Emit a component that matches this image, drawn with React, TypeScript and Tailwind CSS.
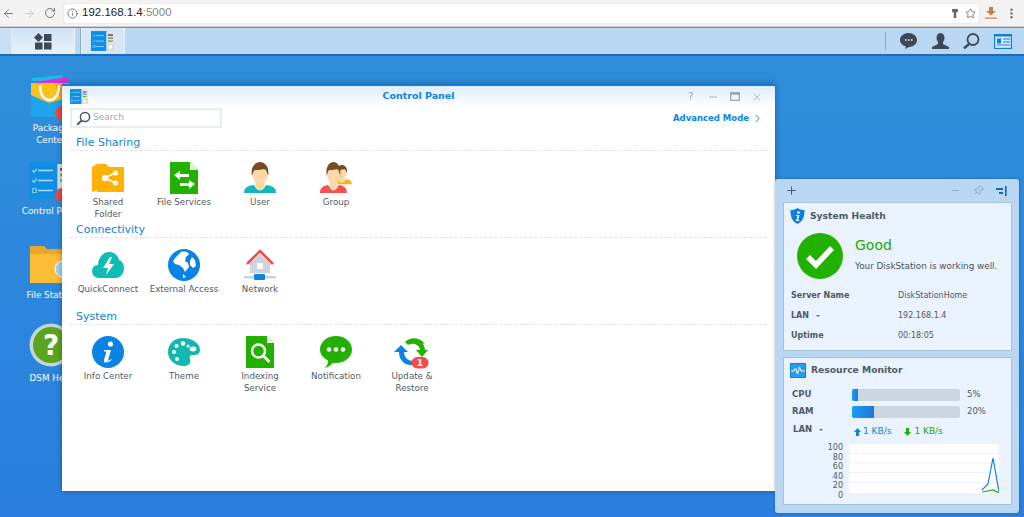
import React from 'react';
import { ArrowLeft, ArrowRight, RotateCw, Info, Star, MoreVertical, Plus, Minus, Pin, X, ChevronRight } from 'lucide-react';

const font = "font-['DejaVu_Sans',sans-serif]";

function ControlPanelIcon({ size = 24, className = '' }: { size?: number; className?: string }) {
  return (
    <svg width={size} height={size * 0.84} viewBox="0 0 24 20" className={className}>
      <rect x="0" y="0" width="15.5" height="20" fill="#0f8fe6" />
      <rect x="15.5" y="1" width="8.5" height="19" fill="#dfe3e6" />
      <path d="M5 4.500h8M5 10h8M5 15.500h8" stroke="#a8e0ff" strokeWidth=".8" />
      <path d="M1.800 4.500l1 1 1.400-2M1.800 10l1 1 1.400-2" fill="none" stroke="#a8e0ff" strokeWidth=".6" />
      <rect x="2" y="14.500" width="2" height="2" fill="none" stroke="#a8e0ff" strokeWidth=".5" />
      <path d="M17 4h5" stroke="#555" strokeWidth="1.500" />
      <path d="M17 7h5" stroke="#888" strokeWidth="1.500" />
      <path d="M17 10h5" stroke="#5fc12f" strokeWidth="1.500" />
      <circle cx="19.500" cy="16" r="2.500" fill="#fff" stroke="#aab" strokeWidth=".5" />
    </svg>
  );
}

function SharedFolder() {
  return (
    <svg width="32" height="30" viewBox="0 0 32 30">
      <path d="M0 4l5-3v26l-5 2z" fill="#ffb000" />
      <path d="M5 1h9l3 3h15v25H5z" fill="#ffb000" />
      <path d="M13 15l10-5M13 15l10 5" stroke="#fff" strokeWidth="1.600" />
      <circle cx="13" cy="15" r="3.200" fill="#fff" />
      <circle cx="23.500" cy="10" r="2.600" fill="#fff" />
      <circle cx="23.500" cy="20" r="2.600" fill="#fff" />
    </svg>
  );
}

function FileServices() {
  return (
    <svg width="30" height="32" viewBox="0 0 30 32">
      <path d="M1 0h20l8 8v24H1z" fill="#22b100" />
      <path d="M21 0v8h8z" fill="#e8f6e0" />
      <path d="M5 13l6-4v3h9v3h-9v3z" fill="#fff" />
      <path d="M26 22l-6-4v3h-9v3h9v3z" fill="#fff" />
    </svg>
  );
}

function Person({ shirt, ox = 0 }: { shirt: string; ox?: number }) {
  return (
    <g transform={`translate(${ox} 0)`}>
      <path d="M0 31c0-5 3-7 9-8l7 3 7-3c6 1 9 3 9 8z" fill={shirt} />
      <path d="M11 19h10v4c0 3-3 5-5 5s-5-2-5-5z" fill="#fcd7a8" stroke="#fff" strokeWidth=".7" />
      <ellipse cx="16" cy="12" rx="7.600" ry="10" fill="#fcd7a8" />
      <path d="M8 14C6 4 12 0 16 0s10 4 8 14c-1-5-2-6-4-7-3 1-8 1-9 1-2 1-2 3-3 6z" fill="#7a4a22" />
    </g>
  );
}

function UserIcon() {
  return (
    <svg width="32" height="32" viewBox="0 0 32 32">
      <Person shirt="#10b8b8" />
    </svg>
  );
}

function GroupIcon() {
  return (
    <svg width="32" height="32" viewBox="0 0 32 32">
      <g transform="translate(12 3) scale(.62)">
        <Person shirt="#ffb000" />
      </g>
      <g transform="translate(0 0) scale(.84 1)">
        <Person shirt="#f55252" />
      </g>
    </svg>
  );
}

function QuickConnect() {
  return (
    <svg width="32" height="26" viewBox="0 0 32 26">
      <path d="M7 26c-4 0-7-3-7-7 0-3 2-6 6-6 0-7 5-13 11-13 5 0 9 3 10 8 3 1 5 4 5 8 0 6-4 10-8 10z" fill="#10bcb4" />
      <path d="M18 5l-7 11h5l-2 7 8-11h-5l3-7z" fill="#fff" />
    </svg>
  );
}

function ExternalAccess() {
  return (
    <svg width="32" height="32" viewBox="0 0 32 32">
      <circle cx="16" cy="16" r="16" fill="#0a84e4" />
      <path d="M13 3c4-1 7 0 8 2l-3 3-1 4 3 2 1 4-4 5-2-4-4-3-4-1-2-3 3-4z" fill="#fff" />
      <path d="M24 8l3 3 1 6-3 2-3-3v-4zM15 25l3 3-3 1z" fill="#fff" />
    </svg>
  );
}

function NetworkIcon() {
  return (
    <svg width="32" height="32" viewBox="0 0 32 32">
      <path d="M6 14L16 5l10 9v10H6z" fill="#ccd4de" />
      <path d="M3 15L16 2l13 13" fill="none" stroke="#f54a4a" strokeWidth="2.600" />
      <rect x="13" y="14" width="6" height="6" fill="#fff" />
      <rect x="0" y="27" width="32" height="2.600" fill="#ccd4de" />
      <rect x="10" y="25" width="11" height="6" rx="1" fill="#0a84e4" />
    </svg>
  );
}

function InfoCenter() {
  return (
    <svg width="32" height="32" viewBox="0 0 32 32">
      <circle cx="16" cy="16" r="16" fill="#0a84e4" />
      <circle cx="18.500" cy="8" r="2.600" fill="#fff" />
      <path d="M12 14h7l-3 10c-.3 1 1 1 3-1l.6.8C17 27 11 28 12 24l2.500-8.500H12z" fill="#fff" />
    </svg>
  );
}

function ThemeIcon() {
  return (
    <svg width="32" height="28" viewBox="0 0 32 28">
      <path d="M15 0c9 0 17 5 17 12 0 4-3 5-6 5-4 0-5 1-4 4 1 3 0 7-6 7C7 28 0 22 0 14 0 6 6 0 15 0z" fill="#10b8b0" />
      <circle cx="15" cy="5.500" r="2.200" fill="#fff" />
      <circle cx="8.500" cy="8" r="2" fill="#fff" />
      <circle cx="20" cy="8" r="1.500" fill="#fff" />
      <circle cx="6" cy="14" r="2" fill="#fff" />
      <circle cx="9" cy="21" r="2" fill="#fff" />
      <ellipse cx="25" cy="11" rx="3.400" ry="2.400" fill="#fff" />
    </svg>
  );
}

function Indexing() {
  return (
    <svg width="30" height="32" viewBox="0 0 30 32">
      <path d="M1 0h21l7 7v25H1z" fill="#22b100" />
      <path d="M22 0v7h7z" fill="#e8f6e0" />
      <circle cx="13.500" cy="15" r="6.500" fill="none" stroke="#fff" strokeWidth="2.400" />
      <path d="M18.500 20l6 6" stroke="#fff" strokeWidth="2.800" />
    </svg>
  );
}

function Notification() {
  return (
    <svg width="32" height="32" viewBox="0 0 32 32">
      <path d="M16 0c9 0 16 6 16 13.500S25 27 16 27c-1 0-2 0-3-.2C11 29 8 31.500 5 32c2-2 3-5 3-7.500C3 22 0 18 0 13.500 0 6 7 0 16 0z" fill="#22b100" />
      <circle cx="9" cy="13.500" r="2.300" fill="#fff" />
      <circle cx="16" cy="13.500" r="2.300" fill="#fff" />
      <circle cx="23" cy="13.500" r="2.300" fill="#fff" />
    </svg>
  );
}

function UpdateRestore() {
  return (
    <svg width="36" height="33" viewBox="0 0 36 33">
      <path d="M11 6c5-5 14-5 19 1l-1 1 0 0c1 2 2 4 2 6h3l-6 7-6-7h4c0-5-7-8-12-5z" fill="#22b100" />
      <path d="M7 9l7 7h-4c0 5 4 9 9 9l-1 4c-7 1-13-5-13-13H0z" fill="#0a84e4" />
      <rect x="17.500" y="21" width="17" height="11.500" rx="5.700" fill="#f54a4a" />
      <text x="26" y="30" textAnchor="middle" fontSize="9" fontWeight="700" fill="#fff" fontFamily="DejaVu Sans, sans-serif">1</text>
    </svg>
  );
}

type AppItem = { label: string[]; icon: React.ReactNode };

const sections: { title: string; items: AppItem[] }[] = [
  {
    title: 'File Sharing',
    items: [
      { label: ['Shared', 'Folder'], icon: <SharedFolder /> },
      { label: ['File Services'], icon: <FileServices /> },
      { label: ['User'], icon: <UserIcon /> },
      { label: ['Group'], icon: <GroupIcon /> },
    ],
  },
  {
    title: 'Connectivity',
    items: [
      { label: ['QuickConnect'], icon: <QuickConnect /> },
      { label: ['External Access'], icon: <ExternalAccess /> },
      { label: ['Network'], icon: <NetworkIcon /> },
    ],
  },
  {
    title: 'System',
    items: [
      { label: ['Info Center'], icon: <InfoCenter /> },
      { label: ['Theme'], icon: <ThemeIcon /> },
      { label: ['Indexing', 'Service'], icon: <Indexing /> },
      { label: ['Notification'], icon: <Notification /> },
      { label: ['Update &', 'Restore'], icon: <UpdateRestore /> },
    ],
  },
];

function BrowserBar() {
  return (
    <div className="h-[27px] bg-[#f2f2f2] border-b border-[#d0d0d0] flex items-center pl-[2px]">
      <ArrowLeft size={13} strokeWidth={1.600} className="text-[#6a6a6a]" />
      <ArrowRight size={13} strokeWidth={1.600} className="text-[#c4c4c4] ml-[8px]" />
      <RotateCw size={12} strokeWidth={1.800} className="text-[#6a6a6a] ml-[8px]" />
      <div className="ml-[8px] w-[915px] h-[19px] bg-white rounded-[2px] shadow-[0_0_1px_#aaa] flex items-center pl-[3px]">
        <Info size={11} strokeWidth={1.600} className="text-[#555]" />
        <span className="ml-[4px] text-[11.500px] text-[#222] font-['Liberation_Sans',sans-serif]">
          192.168.1.4<span className="text-[#888]">:5000</span>
        </span>
        <svg width="6" height="9" viewBox="0 0 7 11" className="ml-auto">
          <path d="M0 0h7v4H5v7H2V4H0z" fill="#666" />
        </svg>
        <Star size={11} strokeWidth={1.600} className="text-[#555] ml-[7px] mr-[3px]" />
      </div>
      <svg width="12" height="12" viewBox="0 0 12 12" className="ml-[6px]">
        <path d="M4 0h4v4h3L6 8.500 1 4h3z" fill="#c9813a" />
        <rect x="0" y="10.500" width="12" height="1.200" fill="#c9813a" />
      </svg>
      <MoreVertical size={13} strokeWidth={2.400} className="text-[#666] ml-[8px]" />
    </div>
  );
}

function Taskbar() {
  return (
    <div className="h-[29px] bg-[#b9d7f2] border-t border-[#6f8fa8] border-b-2 border-b-[#1f6cb5] flex items-stretch">
      <div className="w-[12px] bg-[#c8dff5] border-r border-[#dfeaf5]" />
      <div className="w-[63px] bg-gradient-to-b from-[#cfe3f5] to-[#e8f1f9] border-r border-[#f0f5fa] flex items-center justify-center">
        <svg width="18" height="17" viewBox="0 0 18 17">
          <path d="M4.500 0l4.500 4.500L4.500 9 0 4.500z" fill="#3c4a57" />
          <rect x="10" y="1" width="7.500" height="7" fill="#3c4a57" />
          <rect x="1" y="9.500" width="7.500" height="7" fill="#3c4a57" />
          <rect x="10" y="9.500" width="7.500" height="7" fill="#3c4a57" />
        </svg>
      </div>
      <div className="w-[6px] border-r border-[#8fa9c0]" />
      <div className="w-[44px] bg-[#d5e6f6] border-x border-[#eef4fa] flex items-center justify-center">
        <ControlPanelIcon size={24} />
      </div>
      <div className="flex-1" />
      <div className="w-[1px] my-[4px] bg-[#8fa9c0]" />
      <div className="w-[138px] flex items-center pl-[14px]">
        <svg width="17" height="16" viewBox="0 0 17 16">
          <path d="M8.500 0C13 0 17 3 17 7s-4 7-8 7l-4 2 1-2.500C2 12.500 0 10 0 7c0-4 4-7 8.500-7z" fill="#3c4a57" />
          <path d="M5 7h1.500M8 7h1.500M11 7h1.500" stroke="#fff" strokeWidth="1.400" />
        </svg>
        <svg width="17" height="16" viewBox="0 0 17 16" className="ml-[15px]">
          <ellipse cx="8.500" cy="5" rx="4" ry="5" fill="#3c4a57" />
          <path d="M6 9h5v2l6 3v2H0v-2l6-3z" fill="#3c4a57" />
        </svg>
        <svg width="17" height="16" viewBox="0 0 17 16" className="ml-[14px]">
          <circle cx="10" cy="6.500" r="5.500" fill="none" stroke="#3c4a57" strokeWidth="1.800" />
          <path d="M6 11l-5 4.500" stroke="#3c4a57" strokeWidth="2.400" />
        </svg>
        <svg width="18" height="15" viewBox="0 0 18 15" className="ml-[14px]">
          <rect width="18" height="15" fill="#0f80d8" />
          <rect x="1.200" y="2.500" width="15.600" height="11.300" fill="#d8ecfb" />
          <rect x="3" y="4.500" width="4" height="5" fill="#0f80d8" />
          <path d="M9 5h7M9 8h7M3 11h13" stroke="#0f80d8" strokeWidth="1.100" />
        </svg>
      </div>
    </div>
  );
}

function DesktopIcons() {
  return (
    <>
      {/* desktop shortcuts sit on a free canvas, partly behind the window */}
      <div className="absolute left-[21px] top-[75px] w-[60px] flex flex-col items-center">
        <svg width="44" height="44" viewBox="0 0 44 44">
          <path d="M3 3l30-3 4 6H3z" fill="#19b9e8" />
          <path d="M6 7l32-5 2 8H6z" fill="#d82fd8" />
          <path d="M2 8h38v34H2z" fill="#ffc21a" />
          <path d="M2 20l18 8 20-6v20H2z" fill="#1fa5ee" />
          <path d="M26 8h14v14l-8 3z" fill="#f7a21c" />
          <path d="M11 10c0 11 5 15 9.500 15S30 21 30 10" fill="none" stroke="#fff" strokeWidth="2.400" />
          <circle cx="33" cy="38" r="7" fill="#e84a4a" />
        </svg>
        <span className="mt-[3px] text-[8.800px] leading-[12px] text-white text-center whitespace-pre">{'Package\nCenter'}</span>
      </div>
      <div className="absolute left-[21px] top-[162px] w-[60px] flex flex-col items-center">
        <div className="relative">
          <ControlPanelIcon size={44} />
          <div className="absolute left-[26px] top-[26px] w-[14px] h-[14px] rounded-full bg-[#e84a4a]" />
        </div>
        <span className="mt-[6px] text-[8.800px] text-white whitespace-nowrap">Control Panel</span>
      </div>
      <div className="absolute left-[21px] top-[243px] w-[60px] flex flex-col items-center">
        <svg width="44" height="40" viewBox="0 0 44 40">
          <path d="M1 3h14l3 3h24v34H1z" fill="#e9a628" />
          <path d="M1 11h41v29H1z" fill="#fbbd36" />
          <circle cx="34" cy="26" r="8" fill="#9bd2f5" stroke="#fff" />
        </svg>
        <span className="mt-[6px] text-[8.800px] text-white whitespace-nowrap">File Station</span>
      </div>
      <div className="absolute left-[21px] top-[323px] w-[60px] flex flex-col items-center">
        <svg width="44" height="44" viewBox="0 0 44 44">
          <circle cx="22" cy="22" r="21.500" fill="#c7d4dc" />
          <circle cx="22" cy="22" r="18" fill="#5aa51f" />
          <text x="22" y="32" textAnchor="middle" fontSize="28" fontWeight="700" fill="#fff" fontFamily="DejaVu Sans, sans-serif">?</text>
        </svg>
        <span className="mt-[5px] text-[8.800px] text-white whitespace-nowrap">DSM Help</span>
      </div>
    </>
  );
}

function ControlPanelWindow() {
  return (
    <div className="absolute left-[62px] top-[84px] w-[713px] h-[407px] bg-white border-t-2 border-[#1a78cf] shadow-[0_0_6px_rgba(0,0,0,0.35)] flex flex-col">
      <div className="h-[21px] shrink-0 bg-gradient-to-b from-[#dcecfa] to-white flex items-center pl-[8px] pr-[12px] relative">
        <ControlPanelIcon size={18} />
        <span className="absolute left-0 right-0 text-center text-[9.500px] font-bold text-[#0a84e4]">Control Panel</span>
        <div className="ml-auto flex items-center gap-[11px] text-[#98a2ac]">
          <span className="text-[10px] leading-none w-[8px]">?</span>
          <Minus size={12} strokeWidth={1.600} />
          <svg width="10" height="9" viewBox="0 0 10 9">
            <rect x=".7" y=".7" width="8.600" height="7.600" fill="none" stroke="#98a2ac" strokeWidth="1.200" />
            <rect x=".7" y=".7" width="8.600" height="2" fill="#98a2ac" />
          </svg>
          <X size={12} strokeWidth={1.400} />
        </div>
      </div>
      <div className="h-[20px] mt-[1px] shrink-0 flex items-center pl-[8px] pr-[11px]">
        <div className="w-[152px] h-[20px] border-2 border-[#e6edf3] flex items-center pl-[4px]">
          <svg width="15" height="15" viewBox="0 0 13 13">
            <circle cx="7.800" cy="5.200" r="4" fill="none" stroke="#4a5560" strokeWidth="1.300" />
            <path d="M5 8l-4 4" stroke="#4a5560" strokeWidth="1.700" />
          </svg>
          <span className="ml-[2px] text-[9px] text-[#a0a8b0]">Search</span>
        </div>
        <span className="ml-auto text-[8.500px] font-bold text-[#0a84e4]">Advanced Mode</span>
        <ChevronRight size={13} strokeWidth={1.800} className="ml-[2px] text-[#0a84e4]" />
      </div>
      <div className="pl-[8px] pr-[8px] mt-[6px]">
        {sections.map(section => (
          <div key={section.title} className="h-[87px]">
            <div className="pl-[6px] h-[17px] text-[11px] leading-[17px] text-[#0a84e4] border-b border-dashed border-[#dfe3e7] w-[697px]">
              {section.title}
            </div>
            <div className="flex pt-[11px]">
              {section.items.map(item => (
                <div key={item.label[0]} className="w-[76px] flex flex-col items-center text-center">
                  <div className="h-[32px] flex items-center justify-center">{item.icon}</div>
                  <div className="mt-[3px] text-[8.700px] leading-[11.500px] text-[#505a64] whitespace-nowrap">
                    {item.label.map(l => (
                      <div key={l}>{l}</div>
                    ))}
                  </div>
                </div>
              ))}
            </div>
          </div>
        ))}
      </div>
    </div>
  );
}

function Caret() {
  return <span className="inline-block ml-[4px] mb-[1px] w-0 h-0 border-x-[2.500px] border-x-transparent border-t-[2.500px] border-t-[#667]" />;
}

function WidgetPanel() {
  return (
    <div className="absolute left-[775px] top-[179px] w-[244px] h-[334px] bg-[#b9d7f2] rounded-[3px] shadow-[0_0_3px_rgba(0,0,0,0.3)] flex flex-col pl-[8px] pr-[7px]">
      <div className="h-[23px] shrink-0 flex items-center">
        <Plus size={13} strokeWidth={1.600} className="text-[#3c4a57] ml-[2px]" />
        <Minus size={11} strokeWidth={1.400} className="ml-auto text-[#7f98ad]" />
        <Pin size={11} strokeWidth={2} className="ml-[12px] text-[#94a8b8] rotate-45" />
        <svg width="11" height="10" viewBox="0 0 11 10" className="ml-[12px] mr-[5px]">
          <path d="M0 2h7v2H0zM3 6h4v2H3z" fill="#0f6cba" />
          <rect x="9" y="0" width="1.600" height="10" fill="#0f6cba" />
        </svg>
      </div>
      <div className="h-[149px] shrink-0 bg-[#e9f2fd] border border-[#a9c1d4] px-[6px]">
        <div className="h-[25px] flex items-center">
          <svg width="15" height="16" viewBox="0 0 15 16">
            <path d="M7.500 0c2 1.500 4 2 7 2 0 6-1 11-7 14C1.500 13 .5 8 .5 2c3 0 5-.5 7-2z" fill="#0a7fe0" />
            <circle cx="8.500" cy="4.500" r="1.300" fill="#fff" />
            <path d="M6 7h3.500L8 12h1.500l-.2 1H6l1.500-5H6z" fill="#fff" />
          </svg>
          <span className="ml-[5px] text-[9.200px] font-bold text-[#505a64]">System Health</span>
        </div>
        <div className="flex mt-[5px] pl-[7px]">
          <svg width="46" height="46" viewBox="0 0 46 46">
            <circle cx="23" cy="23" r="23" fill="#22b100" />
            <path d="M11 24l8 8 16-17" fill="none" stroke="#fff" strokeWidth="5.500" />
          </svg>
          <div className="ml-[12px]">
            <div className="text-[14px] leading-[18px] text-[#22a800] mt-[3px]">Good</div>
            <div className="text-[8.800px] leading-[11px] mt-[7px] text-[#48525c] whitespace-nowrap">Your DiskStation is working well.</div>
          </div>
        </div>
        <div className="mt-[7px] text-[8px] text-[#505a64] grid grid-cols-[107px_1fr] auto-rows-[20px] items-center pl-[1px]">
          <span className="font-bold">Server Name</span>
          <span>DiskStationHome</span>
          <span className="font-bold">LAN <Caret /></span>
          <span>192.168.1.4</span>
          <span className="font-bold">Uptime</span>
          <span>00:18:05</span>
        </div>
      </div>
      <div className="mt-[6px] h-[148px] shrink-0 bg-[#e9f2fd] border border-[#a9c1d4] px-[6px]">
        <div className="h-[24px] flex items-center">
          <svg width="16" height="15" viewBox="0 0 16 15">
            <rect width="16" height="15" fill="#0a7fe0" />
            <rect x="1" y="1" width="14" height="13" fill="#2a9bee" />
            <path d="M1 8h3l1.500-3 2 6 2-7 1.500 4h4" fill="none" stroke="#fff" strokeWidth="1" />
          </svg>
          <span className="ml-[5px] text-[9.200px] font-bold text-[#505a64]">Resource Monitor</span>
        </div>
        <div className="text-[8.500px] text-[#505a64] pl-[2px]">
          <div className="flex items-center h-[17px] mt-[4px]">
            <span className="w-[60px] font-bold">CPU</span>
            <div className="w-[108px] h-[12px] bg-[#ccd6df] rounded-[2px] overflow-hidden">
              <div className="w-[6px] h-full bg-gradient-to-r from-[#12a0f5] to-[#2476d6]" />
            </div>
            <span className="ml-[7px]">5%</span>
          </div>
          <div className="flex items-center h-[17px]">
            <span className="w-[60px] font-bold">RAM</span>
            <div className="w-[108px] h-[12px] bg-[#ccd6df] rounded-[2px] overflow-hidden">
              <div className="w-[22px] h-full bg-gradient-to-r from-[#12a0f5] to-[#2476d6]" />
            </div>
            <span className="ml-[7px]">20%</span>
          </div>
          <div className="flex items-center h-[19px]">
            <span className="w-[62px] font-bold pl-[1px]">LAN <Caret /></span>
            <div className="flex items-center pt-[5px] text-[9px]">
              <svg width="7" height="8" viewBox="0 0 7 8">
                <path d="M3.500 0L7 4H5v4H2V4H0z" fill="#0a84e4" />
              </svg>
              <span className="ml-[2px] text-[#0a84e4]">1 KB/s</span>
              <svg width="7" height="8" viewBox="0 0 7 8" className="ml-[13px]">
                <path d="M3.500 8L7 4H5V0H2v4H0z" fill="#22b100" />
              </svg>
              <span className="ml-[3px] text-[#22a800]">1 KB/s</span>
            </div>
          </div>
          <div className="flex mt-[4px] ml-[35px]">
            <div className="w-[16px] text-right text-[8px] leading-[9.500px] text-[#505a64]">
              {[100, 80, 60, 40, 20, 0].map(n => (
                <div key={n}>{n}</div>
              ))}
            </div>
            <svg width="150" height="49" viewBox="0 0 150 49" className="ml-[6px] mt-[1px]">
              <rect width="150" height="49" fill="#fff" />
              <path d="M0 9.500h150M0 19h150M0 28.500h150M0 38.500h150" stroke="#e9f2fd" strokeWidth="1" />
              <path d="M133 46l6-6 5-26 6 34" fill="none" stroke="#0a84e4" strokeWidth="1.200" />
              <path d="M133 48l11-2 6 3" fill="none" stroke="#22b100" strokeWidth="1.200" />
            </svg>
          </div>
        </div>
      </div>
    </div>
  );
}

export default function App() {
  return (
    <div className={`${font} w-[1024px] h-[517px] overflow-hidden flex flex-col`}>
      <BrowserBar />
      <Taskbar />
      <div className="flex-1 bg-gradient-to-b from-[#2f8edb] to-[#2a7fe0]" />
      <DesktopIcons />
      <ControlPanelWindow />
      <WidgetPanel />
    </div>
  );
}
